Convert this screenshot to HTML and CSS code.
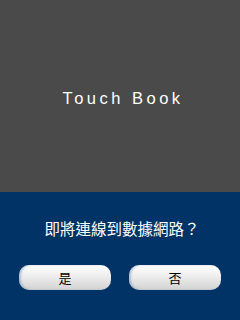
FILE: index.html
```html
<!DOCTYPE html>
<html>
<head>
<meta charset="utf-8">
<link rel="stylesheet" href="styles.css">
</head>
<body>
<div class="screen">
  <div class="splash">
    <div class="title">Touch Book</div>
  </div>
  <div class="dialog">
    <div class="question">即將連線到數據網路？</div>
    <div class="buttons">
      <button class="btn">是</button>
      <button class="btn">否</button>
    </div>
  </div>
</div>
</body>
</html>
```
FILE: styles.css
```css
html, body {
  margin: 0;
  padding: 0;
}
body {
  width: 240px;
  height: 320px;
  overflow: hidden;
  font-family: "Liberation Sans", "Noto Sans CJK TC", sans-serif;
}
.screen {
  display: flex;
  flex-direction: column;
  width: 240px;
  height: 320px;
}
.splash {
  height: 192px;
  background: #4a4a4a;
  display: flex;
  align-items: center;
  justify-content: center;
}
.title {
  color: #ffffff;
  font-size: 16.5px;
  letter-spacing: 3.5px;
  margin-left: 6px;
  margin-top: 4px;
}
.dialog {
  flex: 1;
  background: #023366;
  display: flex;
  flex-direction: column;
  padding-top: 26px;
}
.question {
  color: #ffffff;
  font-family: "Noto Sans CJK TC", sans-serif;
  font-size: 15.5px;
  line-height: 20px;
  height: 20px;
  text-align: center;
  padding-left: 4px;
}
.buttons {
  display: flex;
  gap: 18px;
  padding: 0 19px;
  margin-top: 27px;
}
.btn {
  flex: 1;
  height: 25px;
  border: none;
  border-radius: 10px;
  background: linear-gradient(to bottom, #ffffff 0%, #f0f0f0 40%, #d2d2d2 100%);
  box-shadow: inset 2px 0 2px rgba(120, 150, 190, 0.5);
  font-family: "Noto Sans CJK TC", sans-serif;
  font-size: 13px;
  color: #000000;
  padding: 0;
  line-height: 25px;
}
```
